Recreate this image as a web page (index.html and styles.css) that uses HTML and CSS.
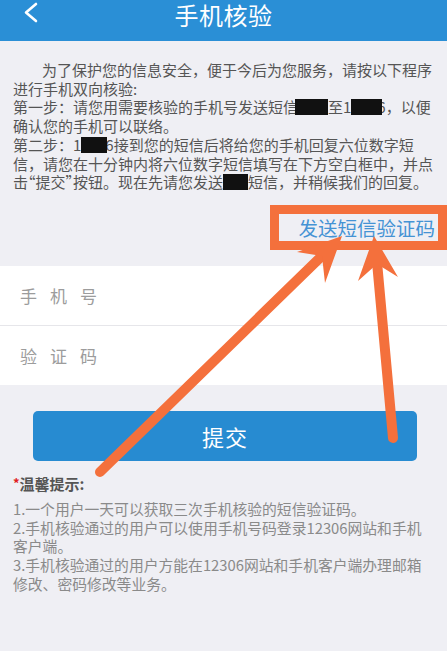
FILE: index.html
```html
<!DOCTYPE html>
<html lang="zh-CN">
<head>
<meta charset="utf-8">
<title>手机核验</title>
<link rel="stylesheet" href="styles.css">
</head>
<body>
<div class="page">
  <header class="topbar">
    <svg class="back" width="16" height="24" viewBox="0 0 16 24"><polyline points="12,2 2,10.5 12,19" fill="none" stroke="#fff" stroke-width="2.6" stroke-linecap="round" stroke-linejoin="round"/></svg>
    <h1 class="title">手机核验</h1>
  </header>

  <div class="intro">
    <p class="l1">为了保护您的信息安全，便于今后为您服务，请按以下程序</p>
    <p>进行手机双向核验:</p>
    <p>第一步：请您用需要核验的手机号发送短信<span class="mask m1"></span>至1<span class="mask m2"></span>6，以便</p>
    <p>确认您的手机可以联络。</p>
    <p>第二步：1<span class="mask m3"></span>6接到您的短信后将给您的手机回复六位数字短</p>
    <p>信，请您在十分钟内将六位数字短信填写在下方空白框中，并点</p>
    <p>击<span class="q">“</span>提交<span class="q">”</span>按钮。现在先请您发送<span class="mask m4"></span>短信，并稍候我们的回复。</p>
  </div>

  <div class="sendrow"><span class="sendlink">发送短信验证码</span></div>

  <div class="form">
    <div class="row"><span class="label">手机号</span></div>
    <div class="row"><span class="label">验证码</span></div>
  </div>

  <div class="btnwrap"><div class="btn">提交</div></div>

  <div class="tips">
    <div class="tips-title"><span class="star">*</span>温馨提示:</div>
    <p>1.一个用户一天可以获取三次手机核验的短信验证码。</p>
    <p>2.手机核验通过的用户可以使用手机号码登录12306网站和手机</p>
    <p>客户端。</p>
    <p>3.手机核验通过的用户方能在12306网站和手机客户端办理邮箱</p>
    <p>修改、密码修改等业务。</p>
  </div>

  <svg class="annot" width="447" height="651" viewBox="0 0 447 651">
    <rect x="274.5" y="209.5" width="168" height="36" fill="none" stroke="#f4703c" stroke-width="9"/>
    <line x1="100" y1="472" x2="328" y2="250" stroke="#f4703c" stroke-width="10" stroke-linecap="round"/>
    <polygon points="342,236 325,283 322,256 297,252" fill="#f4703c"/>
    <line x1="393" y1="438" x2="377" y2="262" stroke="#f4703c" stroke-width="10" stroke-linecap="round"/>
    <polygon points="374,236 398,277 377,264 358,281" fill="#f4703c"/>
  </svg>
</div>
</body>
</html>
```

FILE: styles.css
```css
* { box-sizing: border-box; }
html, body { margin: 0; padding: 0; }
body {
  background: #efeff4;
  font-family: "Noto Sans CJK SC", "Noto Sans", sans-serif;
  width: 447px;
  height: 651px;
  overflow: hidden;
}
.page { position: relative; width: 447px; height: 651px; }
p { margin: 0; }

.topbar {
  height: 41px;
  background: #2a8fd6;
  display: flex;
  align-items: flex-start;
  justify-content: center;
  position: relative;
}
.back { position: absolute; left: 24px; top: 2px; }
.title {
  margin: 0;
  font-weight: normal;
  color: #fff;
  font-size: 24px;
  line-height: 29px;
  letter-spacing: 0.5px;
}

.intro {
  padding: 20px 12px 0 13px;
  color: #555;
  font-size: 15px;
  line-height: 18.7px;
  white-space: nowrap;
}
.intro .l1 { padding-left: 29px; }
.q { font-feature-settings: "halt" 1; }
.mask {
  display: inline-block;
  height: 16px;
  background: #111;
  vertical-align: -2px;
  position: relative;
  z-index: 1;
}
.m1 { width: 33px; margin-left: -3px; }
.m2 { width: 31px; margin-left: 0; margin-right: -5px; }
.m3 { width: 26px; margin-right: -2px; }
.m4 { width: 25px; }

.sendrow {
  margin-top: 22px;
  height: 28px;
  display: flex;
  justify-content: flex-end;
  padding-right: 12px;
}
.sendlink {
  color: #4593d4;
  font-size: 19.5px;
  line-height: 28px;
}

.form {
  margin-top: 24px;
  background: #fff;
}
.row {
  height: 59.5px;
  display: flex;
  align-items: center;
  padding-left: 20px;
}
.row + .row { border-top: 1px solid #e6e6ea; }
.label {
  color: #9c9c9c;
  font-size: 17px;
  letter-spacing: 13px;
}

.btnwrap { padding: 26px 30px 0 33px; }
.btn {
  height: 50px;
  background: #278bd1;
  border-radius: 5px;
  color: #fff;
  font-size: 22px;
  display: flex;
  align-items: center;
  justify-content: center;
  letter-spacing: 1px;
}

.tips { padding: 12px 10px 0 13px; white-space: nowrap; }
.tips-title {
  color: #555;
  font-weight: bold;
  font-size: 15px;
  line-height: 20px;
  margin-bottom: 6px;
}
.star { color: #e02020; font-size: 13px; vertical-align: 2px; }
.tips p {
  color: #8a8a8a;
  font-size: 14.8px;
  line-height: 18.75px;
}

.annot { position: absolute; left: 0; top: 0; pointer-events: none; }
```
